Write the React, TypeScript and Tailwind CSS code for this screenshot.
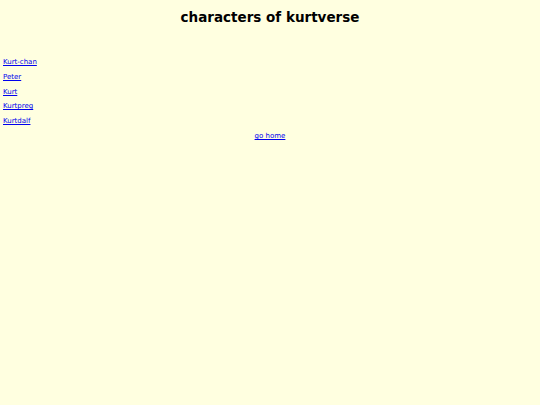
export default function App() {
  const links = ["Kurt-chan", "Peter", "Kurt", "Kurtpreg", "Kurtdalf"];
  return (
    <div className="min-h-[405px] bg-[#ffffe0] text-black" style={{ fontFamily: '"DejaVu Sans", Verdana, sans-serif' }}>
      <h1 className="text-center font-bold text-[13.5px] leading-[16px] pt-[9px]">characters of kurtverse</h1>
      <div className="pt-[33px] px-[3px] flex flex-col gap-[6.8px]">
        {links.map((l) => (
          <a key={l} href="#" className="text-[7px] leading-[8px] text-[#0000ee] underline self-start">
            {l}
          </a>
        ))}
      </div>
      <div className="text-center pt-[6.8px] leading-[8px] text-[7px]">
        <a href="#" className="text-[#0000ee] underline">go home</a>
      </div>
    </div>
  );
}
